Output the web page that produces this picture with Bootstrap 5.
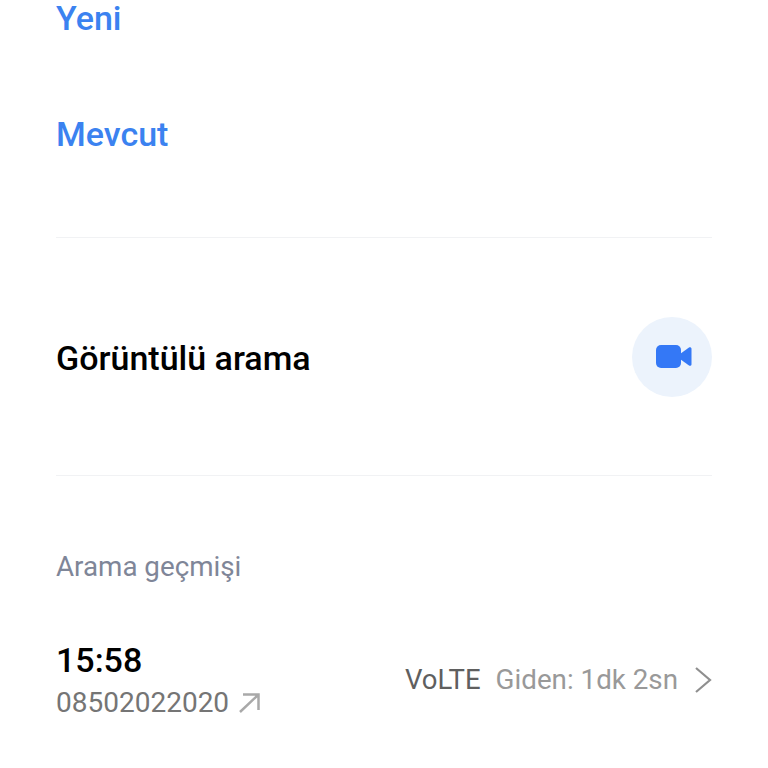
<!DOCTYPE html>
<html lang="tr">
<head>
    <meta charset="UTF-8">
    <meta name="viewport" content="width=device-width, initial-scale=1.0">
    <link href="https://cdn.jsdelivr.net/npm/bootstrap@5.3.0/dist/css/bootstrap.min.css" rel="stylesheet">
    <title>Arama</title>
    <style>
        body {
            font-family: Roboto, "Noto Sans", sans-serif;
            background: #fff;
            height: 768px;
            overflow: hidden;
        }
        .screen { padding: 0 56px; }
        .action-link {
            display: block;
            color: #3b82f0;
            font-size: 34px;
            font-weight: 500;
            line-height: 38px;
            text-decoration: none;
        }
        .action-new { line-height: 37px; margin-bottom: 78px; }
        .action-existing { margin-bottom: 84px; }
        .rule { height: 1px; background: #f1f2f4; }
        .video-row { height: 237px; color: #000; font-size: 34px; font-weight: 500; }
        .video-label { padding-top: 4px; }
        .video-btn {
            width: 80px;
            height: 80px;
            background: #ecf3fc;
            border: 0;
        }
        .video-icon { margin-left: 4px; }
        .history-title {
            color: #7f8698;
            font-size: 27.75px;
            line-height: 32px;
            margin-top: 75px;
            margin-bottom: 58px;
        }
        .call-time { color: #000; font-size: 34px; font-weight: 500; line-height: 38px; }
        .call-number { color: #757575; font-size: 28px; line-height: 32px; margin-top: 8px; }
        .call-type { color: #5f5f5f; font-size: 27.5px; margin-right: 15px; }
        .call-length { color: #999; font-size: 27.75px; margin-right: 16px; }
    </style>
</head>
<body>
    <div class="screen">
        <a class="action-link action-new" href="#">Yeni</a>
        <a class="action-link action-existing" href="#">Mevcut</a>
        <div class="rule"></div>

        <div class="video-row d-flex align-items-center justify-content-between">
            <span class="video-label">Görüntülü arama</span>
            <button class="video-btn rounded-circle d-flex align-items-center justify-content-center p-0" type="button" aria-label="Görüntülü arama">
                <svg class="video-icon" width="36" height="24" viewBox="0 0 36 24"><rect x="0" y="0" width="25" height="23" rx="5" fill="#3478f6"/><path d="M24 9l9-6.500c1-.7 2.500 0 2.500 1.300v15.400c0 1.300-1.500 2-2.500 1.300l-9-6.500z" fill="#3478f6"/></svg>
            </button>
        </div>
        <div class="rule"></div>

        <div class="history-title">Arama geçmişi</div>

        <div class="d-flex align-items-center justify-content-between">
            <div>
                <div class="call-time">15:58</div>
                <div class="call-number d-flex align-items-center gap-2">08502022020
                    <svg width="24" height="22" viewBox="0 0 24 22" fill="none" stroke="#a9a9a9" stroke-width="2.500"><path d="M3 20L21 3M6 2.500h15.500V18"/></svg>
                </div>
            </div>
            <div class="d-flex align-items-center">
                <span class="call-type">VoLTE</span>
                <span class="call-length">Giden: 1dk 2sn</span>
                <svg width="18" height="28" viewBox="0 0 18 28" fill="none" stroke="#8f8f8f" stroke-width="2.200"><path d="M2 2l14 12L2 26"/></svg>
            </div>
        </div>
    </div>
    <script src="https://cdn.jsdelivr.net/npm/bootstrap@5.3.0/dist/js/bootstrap.bundle.min.js"></script>
</body>
</html>
